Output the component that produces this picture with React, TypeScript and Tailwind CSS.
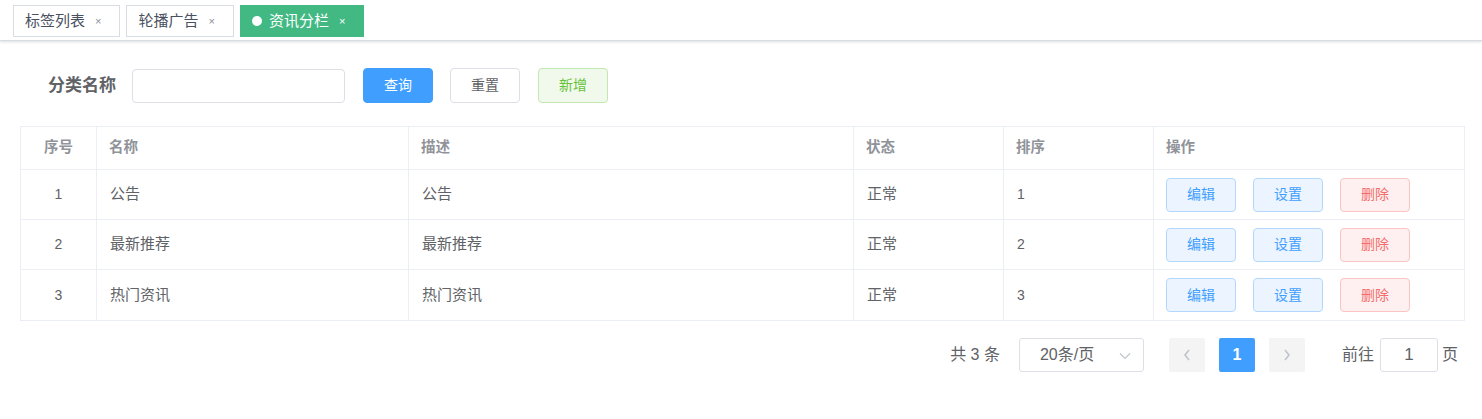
import React from "react";

const font = { fontFamily: '"Liberation Sans", "Noto Sans CJK SC", sans-serif' };

function Tab({ label, active }: { label: string; active?: boolean }) {
  return (
    <div
      className={
        "flex items-center h-[32px] border text-[15px] " +
        (active
          ? "bg-[#42b983] border-[#42b983] text-white pl-[11px] pr-[18px]"
          : "bg-white border-[#d8dce5] text-[#495060] pl-[11px] pr-[18px]")
      }
    >
      {active && <span className="w-[10px] h-[10px] rounded-full bg-white mr-[7px]" />}
      <span>{label}</span>
      <span className={"ml-[10px] text-[11px] " + (active ? "text-white" : "text-[#8a8f99]")}>×</span>
    </div>
  );
}

const rows = [
  { id: 1, name: "公告", desc: "公告", status: "正常", sort: 1 },
  { id: 2, name: "最新推荐", desc: "最新推荐", status: "正常", sort: 2 },
  { id: 3, name: "热门资讯", desc: "热门资讯", status: "正常", sort: 3 },
];

export default function App() {
  return (
    <div className="w-[1482px] h-[419px] bg-white" style={font}>
      {/* Tags view */}
      <div className="h-[41px] border-b border-[#d8dce5] shadow-[0_1px_3px_0_rgba(0,0,0,0.12),0_0_3px_0_rgba(0,0,0,0.04)] flex items-start pt-[5px] pl-[13px] gap-[6px]">
        <Tab label="标签列表" />
        <Tab label="轮播广告" />
        <Tab label="资讯分栏" active />
      </div>

      {/* Search form */}
      <div className="flex items-center mt-[27px] h-[35px]">
        <div className="ml-[48px] w-[84px] text-[17px] font-bold text-[#606266]">分类名称</div>
        <div className="w-[213px] h-[34px] border border-[#dcdfe6] rounded-[4px] bg-white" />
        <button className="ml-[18px] w-[70px] h-[35px] rounded-[4px] bg-[#409eff] border border-[#409eff] text-white text-[14px]">查询</button>
        <button className="ml-[17px] w-[70px] h-[35px] rounded-[4px] bg-white border border-[#dcdfe6] text-[#606266] text-[14px]">重置</button>
        <button className="ml-[18px] w-[70px] h-[35px] rounded-[4px] bg-[#f0f9eb] border border-[#c2e7b0] text-[#67c23a] text-[14px]">新增</button>
      </div>

      {/* Table */}
      <div className="ml-[20px] mr-[17px] mt-[23px] border border-[#ebeef5] text-[15px]">
        <div className="flex h-[43px] text-[#909399] font-bold text-[14.5px] border-b border-[#ebeef5]">
          <div className="w-[76px] flex items-center justify-center border-r border-[#ebeef5]">序号</div>
          <div className="w-[312px] flex items-center px-[12px] border-r border-[#ebeef5]">名称</div>
          <div className="w-[445px] flex items-center px-[12px] border-r border-[#ebeef5]">描述</div>
          <div className="w-[150px] flex items-center px-[12px] border-r border-[#ebeef5]">状态</div>
          <div className="w-[150px] flex items-center px-[12px] border-r border-[#ebeef5]">排序</div>
          <div className="flex-1 flex items-center px-[12px]">操作</div>
        </div>
        {rows.map((r, i) => (
          <div
            key={r.id}
            className={"flex h-[50px] text-[#606266] " + (i < rows.length - 1 ? "border-b border-[#ebeef5]" : "")}
          >
            <div className="w-[76px] flex items-center justify-center border-r border-[#ebeef5] text-[14px]">{r.id}</div>
            <div className="w-[312px] flex items-center px-[13px] border-r border-[#ebeef5]">{r.name}</div>
            <div className="w-[445px] flex items-center px-[13px] border-r border-[#ebeef5]">{r.desc}</div>
            <div className="w-[150px] flex items-center px-[13px] border-r border-[#ebeef5]">{r.status}</div>
            <div className="w-[150px] flex items-center px-[13px] border-r border-[#ebeef5] text-[14px]">{r.sort}</div>
            <div className="flex-1 flex items-center pl-[12px] gap-[17px]">
              <button className="w-[70px] h-[34px] rounded-[4px] bg-[#ecf5ff] border border-[#b3d8ff] text-[#409eff] text-[14px]">编辑</button>
              <button className="w-[70px] h-[34px] rounded-[4px] bg-[#ecf5ff] border border-[#b3d8ff] text-[#409eff] text-[14px]">设置</button>
              <button className="w-[70px] h-[34px] rounded-[4px] bg-[#fef0f0] border border-[#fbc4c4] text-[#f56c6c] text-[14px]">删除</button>
            </div>
          </div>
        ))}
      </div>

      {/* Pagination */}
      <div className="flex items-center justify-end mt-[17px] pr-[24px] h-[34px] text-[16px] text-[#606266]">
        <span className="mr-[19px]">共 3 条</span>
        <div className="relative w-[125px] h-[34px] border border-[#dcdfe6] rounded-[3px] flex items-center pl-[20px]">
          <span>20条/页</span>
          <svg className="absolute right-[12px] top-[13px]" width="12" height="8" viewBox="0 0 12 8">
            <path d="M1 1.5 L6 6.5 L11 1.5" fill="none" stroke="#c0c4cc" strokeWidth="1.2" />
          </svg>
        </div>
        <div className="ml-[25px] w-[36px] h-[34px] rounded-[2px] bg-[#f4f4f5] flex items-center justify-center">
          <svg width="8" height="12" viewBox="0 0 8 12">
            <path d="M6 1 L2 6 L6 11" fill="none" stroke="#c0c4cc" strokeWidth="1.6" />
          </svg>
        </div>
        <div className="ml-[14px] w-[36px] h-[34px] rounded-[2px] bg-[#409eff] text-white font-bold flex items-center justify-center text-[16px]">1</div>
        <div className="ml-[14px] w-[36px] h-[34px] rounded-[2px] bg-[#f4f4f5] flex items-center justify-center">
          <svg width="8" height="12" viewBox="0 0 8 12">
            <path d="M2 1 L6 6 L2 11" fill="none" stroke="#c0c4cc" strokeWidth="1.6" />
          </svg>
        </div>
        <span className="ml-[37px]">前往</span>
        <div className="ml-[6px] w-[58px] h-[34px] border border-[#dcdfe6] rounded-[3px] flex items-center justify-center text-[17px]">1</div>
        <span className="ml-[4px]">页</span>
      </div>
    </div>
  );
}
